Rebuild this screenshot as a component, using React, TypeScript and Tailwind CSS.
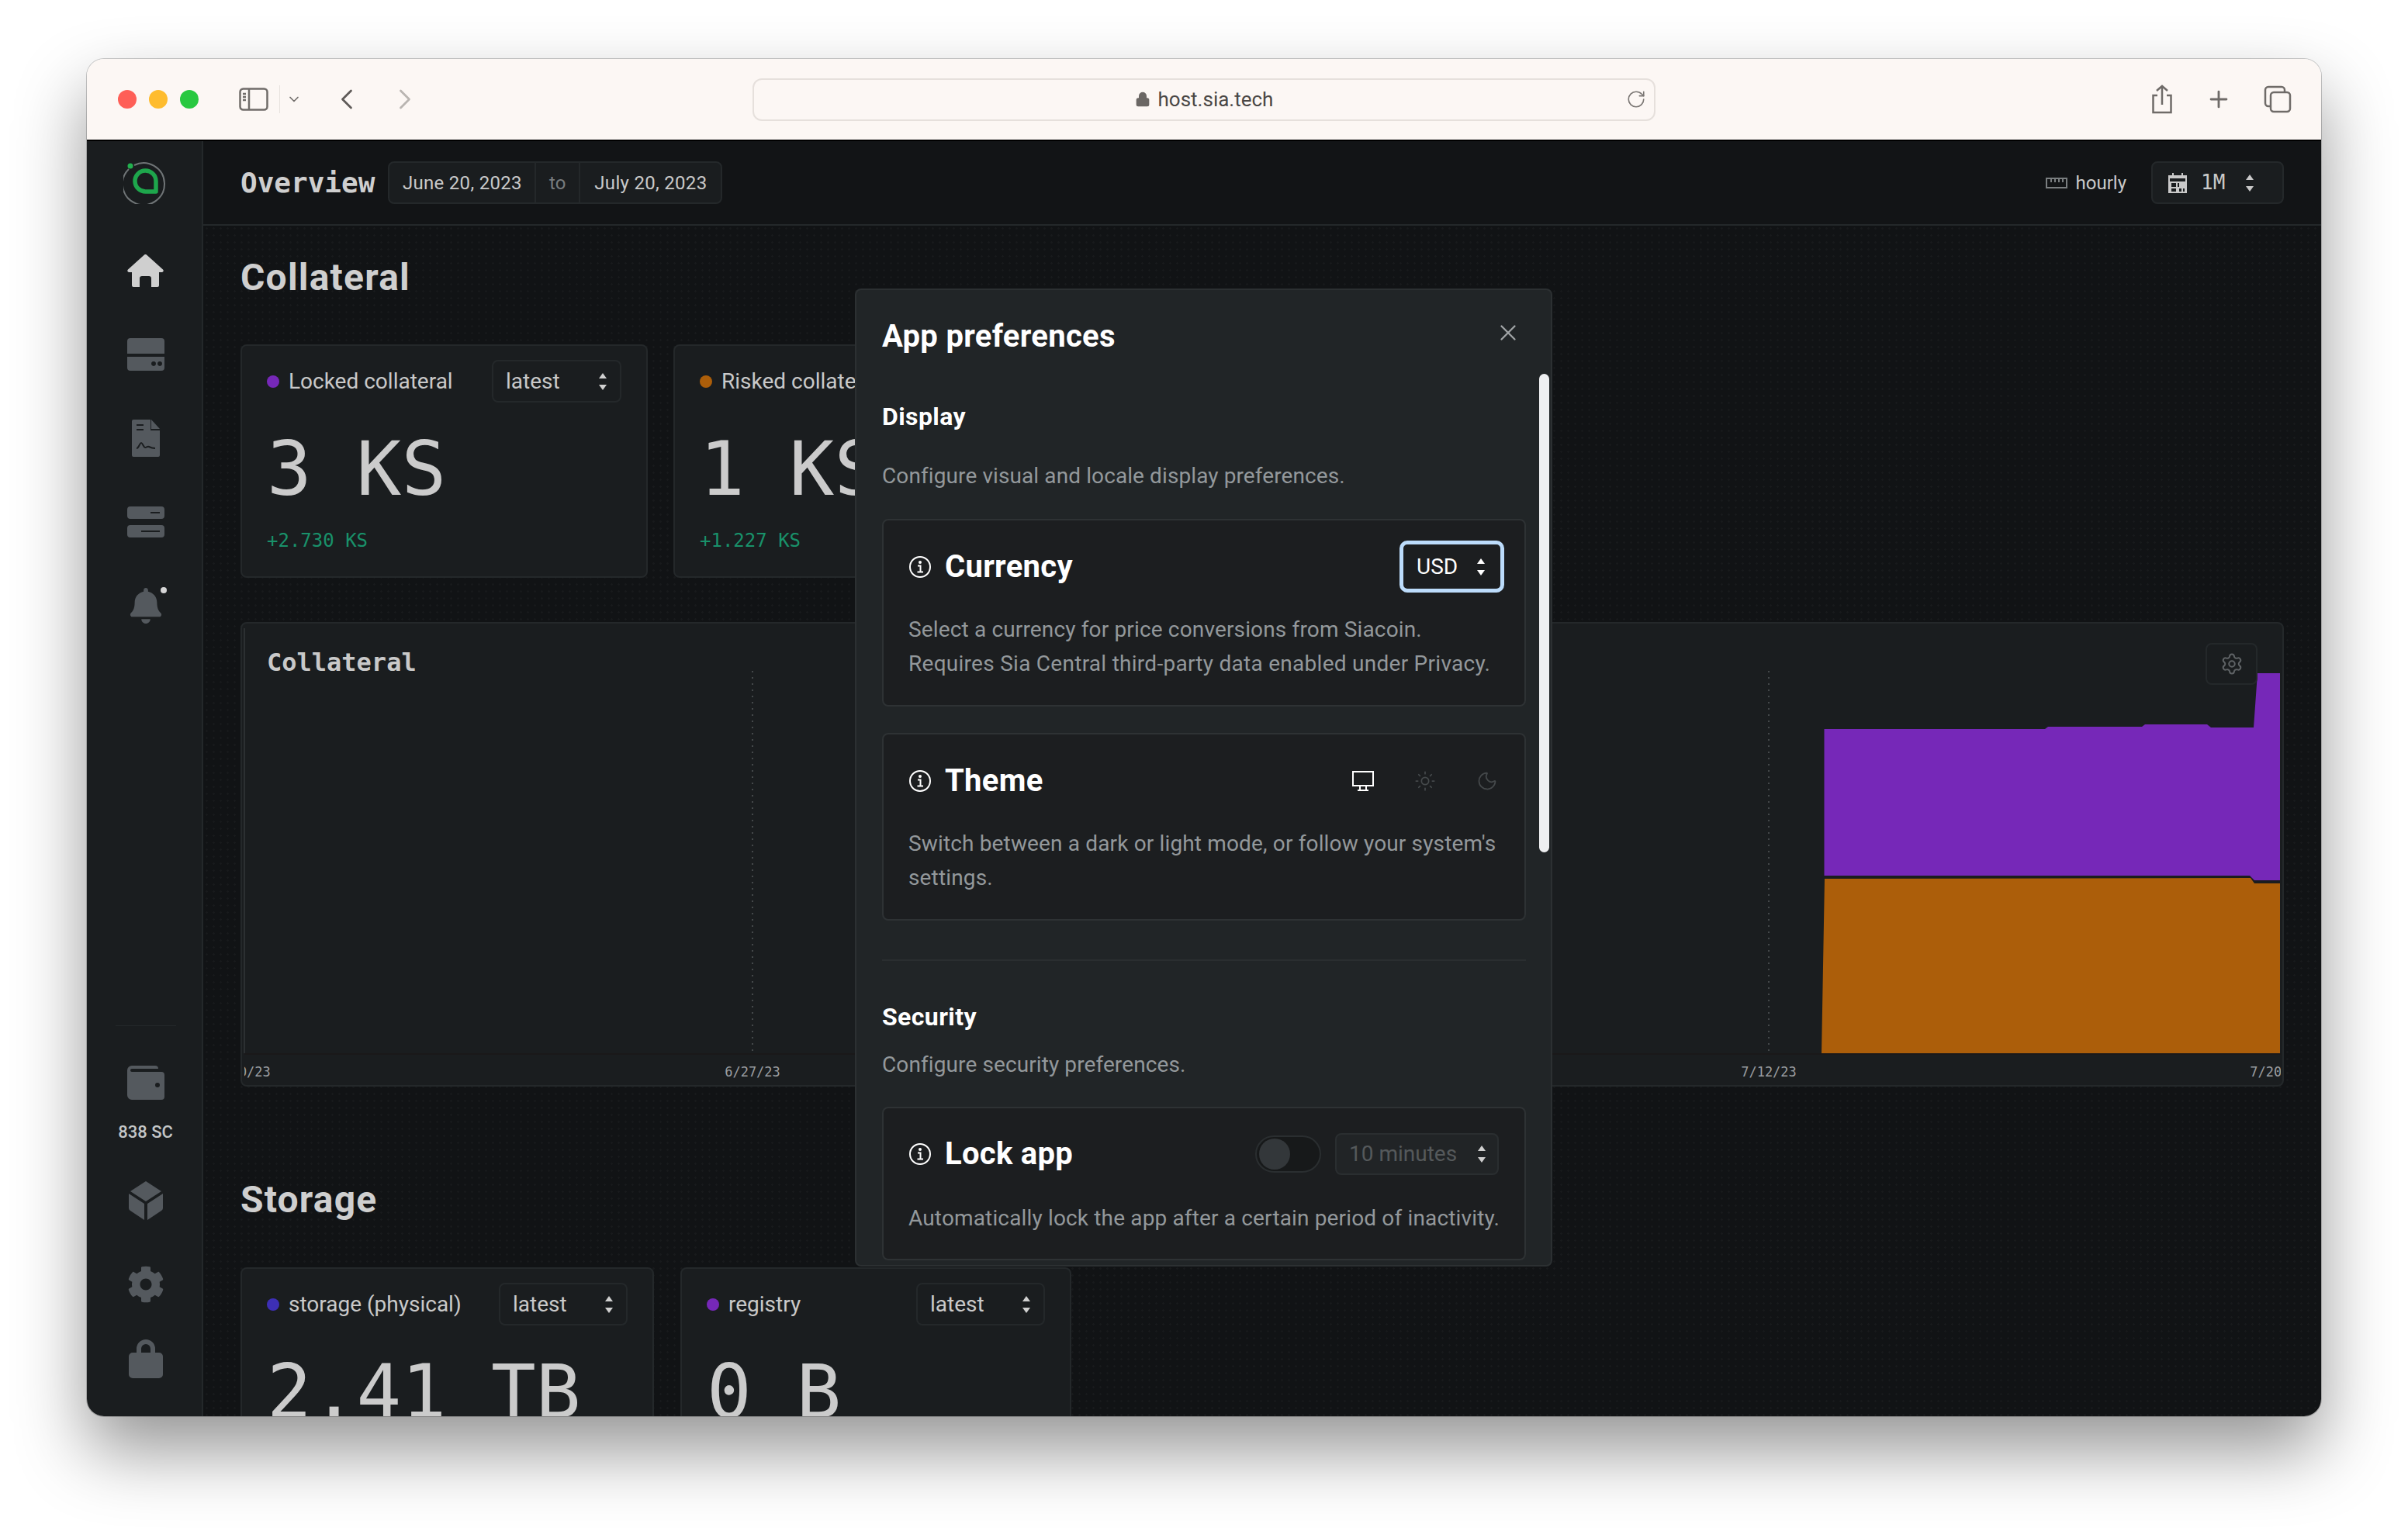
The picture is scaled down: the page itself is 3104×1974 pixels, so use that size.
import { ChevronDown, ChevronLeft, ChevronRight, Lock, Moon, Plus, RotateCw, Settings, Sun, X } from "lucide-react";
import { FaBell, FaCog } from "react-icons/fa";

const sans = "font-['Roboto','Liberation_Sans',sans-serif]";
const mono = "font-['DejaVu_Sans_Mono',monospace]";

function UpDown({ className = "text-[#d0d0d0]" }: { className?: string }) {
  return (
    <svg width="12" height="24" viewBox="0 0 12 24" className={className} fill="currentColor">
      <path d="M6 1l5 7H1z" />
      <path d="M6 23l5-7H1z" />
    </svg>
  );
}

function Select({ label, className }: { label: string; className: string }) {
  return (
    <div className={`flex h-[55px] items-center justify-between rounded-[8px] border-2 border-[#24282a] bg-[#1a1d1f] pl-[16px] pr-[16px] text-[28px] text-[#c9c9c9] ${className}`}>
      <span>{label}</span>
      <UpDown />
    </div>
  );
}

function StatCard({ color, label, value, delta, width, selectWidth, cut }: { color: string; label: string; value: string; delta?: string; width: string; selectWidth: string; cut?: boolean }) {
  return (
    <div className={`shrink-0 rounded-[8px] border-2 border-[#24282a] bg-[#1a1d1f] px-[32px] pt-[18px] ${cut ? "h-[260px]" : "h-[301px]"} ${width}`}>
      <div className="flex items-center justify-between">
        <div className="flex items-center gap-[12px] whitespace-nowrap text-[28px] text-[#c9c9c9]">
          <span className={`size-[16px] rounded-full ${color}`} />
          {label}
        </div>
        <Select label="latest" className={selectWidth} />
      </div>
      <div className={`mt-[30px] h-[112px] whitespace-pre text-[96px] leading-[112px] text-[#cbcbcb] ${mono}`}>{value}</div>
      {delta && <div className={`mt-[18px] text-[24px] text-[#19916a] ${mono}`}>{delta}</div>}
    </div>
  );
}

function InfoIcon() {
  return (
    <svg width="30" height="30" viewBox="0 0 30 30" fill="none" stroke="white" strokeWidth="2" className="shrink-0">
      <circle cx="15" cy="15" r="13" />
      <path d="M12 13.5h3.5v8M11.5 21.5h7.5" />
      <circle cx="15" cy="9" r="1" fill="white" />
    </svg>
  );
}

function PrefCard({ title, children, desc, lock }: { title: string; children: React.ReactNode; desc: React.ReactNode; lock?: boolean }) {
  return (
    <div className={`rounded-[8px] border-2 border-[#2e3234] bg-[#1c1e20] pl-[32px] pr-[26px] ${lock ? "h-[198px] pt-[32px]" : "h-[242px] pt-[26px]"}`}>
      <div className={`flex items-center justify-between ${lock ? "h-[54px]" : "h-[67px]"}`}>
        <div className="flex items-center gap-[17px]">
          <InfoIcon />
          <span className="text-[40px] font-bold tracking-[0.3px] text-white">{title}</span>
        </div>
        {children}
      </div>
      <p className={`${lock ? "mt-[34px]" : "mt-[26px]"} text-[28px] leading-[44px] tracking-[0.15px] text-[#93989b]`}>{desc}</p>
    </div>
  );
}

function Chart() {
  return (
    <svg viewBox="2 2 2630 595" className="block h-[595px] w-[2630px]">
      <defs>
        <clipPath id="plot">
          <rect x="5" y="0" width="2625" height="599" />
        </clipPath>
      </defs>
      <line x1="5" y1="8" x2="5" y2="556" stroke="#2c3032" strokeWidth="2" />
      <line x1="660" y1="63" x2="660" y2="555" stroke="#44484a" strokeWidth="2" strokeDasharray="2 6" />
      <line x1="1970" y1="63" x2="1970" y2="555" stroke="#44484a" strokeWidth="2" strokeDasharray="2 6" />
      <path d="M2041.5 138L2326 138L2330 135L2451 135L2455 132L2535 132L2540 136L2595 136L2600 66L2629 66L2629 333L2596 333L2590 327L2041.5 327Z" fill="#7628b8" />
      <path d="M2038 557L2042 331L2591 330L2596 337L2629 337L2629 557Z" fill="#ac5e0a" />
      <line x1="5" y1="557" x2="2630" y2="557" stroke="#1a1819" strokeWidth="2" />
      <g clipPath="url(#plot)" fontFamily="DejaVu Sans Mono, monospace" fontSize="17" fill="#9a9ea1" textAnchor="middle">
        <text x="3" y="586">6/20/23</text>
        <text x="660" y="586">6/27/23</text>
        <text x="1970" y="586">7/12/23</text>
        <text x="2626" y="586">7/20/23</text>
      </g>
    </svg>
  );
}

function SiaLogo() {
  return (
    <svg width="58" height="58" viewBox="0 0 58 58" fill="none">
      <path d="M14 8A27 27 0 1 1 7 13" stroke="#6f7476" strokeWidth="2" />
      <circle cx="9" cy="9" r="3.5" fill="#22b04e" />
      <path d="M42 42H29a13.5 13.5 0 1 1 13-13.5z" stroke="#1ea64c" strokeWidth="5.5" strokeLinejoin="round" />
    </svg>
  );
}

function SideItem({ children, className = "h-[108px]" }: { children: React.ReactNode; className?: string }) {
  return <div className={`relative flex items-center justify-center text-[#54595e] ${className}`}>{children}</div>;
}

export default function App() {
  return (
    <div className={`h-[1974px] w-[3104px] overflow-hidden bg-white pl-[112px] pt-[76px] ${sans}`}>
      <div className="flex h-[1750px] w-[2880px] flex-col overflow-hidden rounded-[22px] shadow-[0_0_0_1px_rgba(0,0,0,0.2),0_44px_90px_rgba(0,0,0,0.42)]">
        <div className="flex h-[106px] shrink-0 items-center border-b-2 border-black bg-[#fcf7f4] pl-[40px] pr-[38px]">
          <div className="flex gap-[16px]">
            <span className="size-[24px] rounded-full bg-[#fe5f57]" />
            <span className="size-[24px] rounded-full bg-[#febc2e]" />
            <span className="size-[24px] rounded-full bg-[#28c840]" />
          </div>
          <svg width="38" height="30" viewBox="0 0 38 30" fill="none" stroke="#706c69" strokeWidth="2.5" className="ml-[52px]">
            <rect x="1.5" y="1.5" width="35" height="27" rx="4" />
            <path d="M13 2v26M5 8h4M5 12h4M5 16h4" />
          </svg>
          <div className="ml-[14px] h-[36px] w-px bg-[#e8e2de]" />
          <ChevronDown size={20} color="#706c69" className="ml-[8px]" />
          <ChevronLeft size={44} color="#5f5b58" strokeWidth={1.5} className="ml-[36px]" />
          <ChevronRight size={44} color="#b9b5b1" strokeWidth={1.5} className="ml-[31px]" />
          <div className="relative ml-[426px] flex h-[55px] w-[1164px] shrink-0 items-center justify-center rounded-[12px] border-2 border-[#e6e0dc]">
            <Lock size={20} color="#6b6764" fill="#6b6764" className="mr-[10px]" />
            <span className="text-[26px] text-[#4a4745]">host.sia.tech</span>
            <RotateCw size={26} color="#7a7673" strokeWidth={1.5} className="absolute right-[10px]" />
          </div>
          <div className="ml-auto flex items-center gap-[41px] text-[#6f6b68]">
            <svg width="30" height="38" viewBox="0 0 30 38" fill="none" stroke="currentColor" strokeWidth="2.5">
              <path d="M9 14H3.5v22h23V14H21M15 26V2M8 8l7-6 7 6" />
            </svg>
            <Plus size={34} strokeWidth={2} />
            <svg width="36" height="36" viewBox="0 0 36 36" fill="none" stroke="currentColor" strokeWidth="2.5">
              <rect x="9" y="9" width="25" height="25" rx="4" />
              <path d="M9 27H6a4 4 0 0 1-4-4V6a4 4 0 0 1 4-4h17a4 4 0 0 1 4 4v3" />
            </svg>
          </div>
        </div>

        <div className="flex min-h-0 flex-1">
          <aside className="flex w-[150px] shrink-0 flex-col justify-between border-r-2 border-[#24282a] bg-[#1a1d1f] pl-[3px]">
            <div>
              <div className="flex justify-center pt-[23px]">
                <SiaLogo />
              </div>
              <div className="mt-[32px]">
                <SideItem>
                  <svg width="47" height="42" viewBox="0 0 47 42" fill="#cfcfcf">
                    <path d="M23.5 0c.8 0 1.5.4 2 1L46 19.5c1.4 1.300.6 3.500-1.300 3.500H41v17a2 2 0 0 1-2 2h-8V31a3 3 0 0 0-3-3h-9a3 3 0 0 0-3 3v11H8a2 2 0 0 1-2-2V23H2.300C.4 23-.4 20.800 1 19.500L21.500 1c.5-.6 1.200-1 2-1z" />
                  </svg>
                </SideItem>
                <SideItem>
                  <svg width="48" height="42" viewBox="0 0 48 42" fill="currentColor">
                    <path d="M4 0h40a4 4 0 0 1 4 4v16H0V4a4 4 0 0 1 4-4z" />
                    <path fillRule="evenodd" d="M0 24h48v14a4 4 0 0 1-4 4H4a4 4 0 0 1-4-4zM31 33a3 3 0 1 0 0-.1zM39 33a3 3 0 1 0 0-.1z" />
                  </svg>
                </SideItem>
                <SideItem>
                  <svg width="36" height="48" viewBox="0 0 36 48" fill="currentColor">
                    <path d="M2 0h22v14h12v32a2 2 0 0 1-2 2H2a2 2 0 0 1-2-2V2a2 2 0 0 1 2-2z" />
                    <path d="M25 0l11 12H25z" />
                    <path d="M6 7h9M6 13h9M6 37c3 0 4-7 6-7s3 6 5 6 3-2 5-1 4 2 8 2" fill="none" stroke="#1a1d1f" strokeWidth="2" />
                  </svg>
                </SideItem>
                <SideItem>
                  <svg width="48" height="40" viewBox="0 0 48 40" fill="currentColor">
                    <path fillRule="evenodd" d="M4 0h40a4 4 0 0 1 4 4v8a4 4 0 0 1-4 4H4a4 4 0 0 1-4-4V4a4 4 0 0 1 4-4zM30 7v2h12V7z" />
                    <path fillRule="evenodd" d="M4 24h40a4 4 0 0 1 4 4v8a4 4 0 0 1-4 4H4a4 4 0 0 1-4-4v-8a4 4 0 0 1 4-4zM18 31v2h24v-2z" />
                  </svg>
                </SideItem>
                <SideItem>
                  <FaBell size={46} />
                  <span className="absolute left-[92px] top-[30px] h-[8px] w-[8px] rounded-full bg-[#d6d6d6]" />
                </SideItem>
              </div>
            </div>
            <div className="pb-[44px]">
              <div className="mx-auto w-[78px] border-t border-[#24282a]" />
              <SideItem className="mt-[48px] h-[50px]">
                <svg width="48" height="44" viewBox="0 0 48 44" fill="currentColor">
                  <path d="M6 0h30a4 4 0 0 1 4 4H6a2 2 0 0 0 0 4h38a4 4 0 0 1 4 4v28a4 4 0 0 1-4 4H6a6 6 0 0 1-6-6V6a6 6 0 0 1 6-6z" />
                  <circle cx="39" cy="25" r="3" fill="#1a1d1f" />
                </svg>
              </SideItem>
              <div className="mt-[22px] text-center text-[22px] font-medium text-[#c4c6c7]">838 SC</div>
              <SideItem className="mt-[42px] h-[60px]">
                <svg width="44" height="50" viewBox="0 0 44 50" fill="currentColor">
                  <path d="M22 0l20 13-20 13L2 13z" />
                  <path d="M0 16l20 13v21L2 38a4 4 0 0 1-2-3z" />
                  <path d="M44 16L24 29v21l18-12a4 4 0 0 0 2-3z" />
                </svg>
              </SideItem>
              <SideItem className="mt-[48px] h-[60px]"><FaCog size={48} /></SideItem>
              <SideItem className="mt-[36px] h-[60px]">
                <svg width="44" height="50" viewBox="0 0 44 50" fill="currentColor">
                  <path fillRule="evenodd" d="M10 17v-5a12 12 0 0 1 24 0v5h5a5 5 0 0 1 5 5v23a5 5 0 0 1-5 5H5a5 5 0 0 1-5-5V22a5 5 0 0 1 5-5zm6 0h12v-5a6 6 0 0 0-12 0z" />
                </svg>
              </SideItem>
            </div>
          </aside>

          <main className="relative min-w-0 flex-1 overflow-hidden bg-[#111315] bg-[radial-gradient(#181a1c_1px,transparent_1.5px)] bg-[length:9px_9px]">
            <header className="flex h-[109px] items-center justify-between border-b-2 border-[#24282a] bg-[#121416] pl-[48px] pr-[48px]">
              <div className="flex items-center">
                <h1 className={`text-[36px] font-bold text-[#cfcfcf] ${mono}`}>Overview</h1>
                <div className="ml-[17px] flex h-[55px] items-center rounded-[8px] border-2 border-[#24282a] bg-[#1a1d1f] text-[24px] tracking-[0.3px] text-[#c9c9c9]">
                  <span className="flex h-full w-[189px] items-center justify-center border-r-2 border-[#24282a]">June 20, 2023</span>
                  <span className="flex h-full w-[57px] items-center justify-center border-r-2 border-[#24282a] text-[#777b7e]">to</span>
                  <span className="flex h-full w-[181px] items-center justify-center">July 20, 2023</span>
                </div>
              </div>
              <div className="flex items-center">
                <svg width="28" height="14" viewBox="0 0 28 14" fill="none" stroke="#7a7e80" strokeWidth="2">
                  <rect x="1" y="1" width="26" height="12" />
                  <path d="M7 1v5M12 1v5M17 1v5M22 1v5" />
                </svg>
                <span className="ml-[11px] text-[24px] text-[#c9c9c9]">hourly</span>
                <div className="ml-[32px] flex h-[55px] w-[171px] items-center rounded-[8px] border-2 border-[#24282a] bg-[#1a1d1f] pl-[20px]">
                  <svg width="24" height="26" viewBox="0 0 24 26" fill="#c9c9c9">
                    <path fillRule="evenodd" d="M5 0h2v3h10V0h2v3h5v23H0V3h5zM2 7v4h20V7zM4 13v5h6v-5zm8 0v5h2v-5zM4 20v4h6v-4zm10 0v4h3v-4zm5 0v4h2v-4z" />
                  </svg>
                  <span className={`ml-[18px] text-[26px] text-[#c9c9c9] ${mono}`}>1M</span>
                  <UpDown className="ml-[26px] text-[#c9c9c9]" />
                </div>
              </div>
            </header>

            <div className="pl-[48px] pr-[48px]">
              <h2 className="mt-[37px] h-[60px] text-[48px] font-bold leading-[60px] tracking-[1.2px] text-[#cfcfcf]">Collateral</h2>
              <div className="mt-[56px] flex gap-[33px]">
                <StatCard color="bg-[#7628b8]" label="Locked collateral" value="3 KS" delta="+2.730 KS" width="w-[525px]" selectWidth="w-[167px]" />
                <StatCard color="bg-[#ac5e0a]" label="Risked collateral" value="1 KS" delta="+1.227 KS" width="w-[525px]" selectWidth="w-[167px]" />
              </div>
              <div className="relative mt-[57px] h-[599px] w-[2634px] overflow-hidden rounded-[8px] border-2 border-[#24282a] bg-[#1a1d1f]">
                <Chart />
                <div className={`absolute left-[32px] top-[26px] text-[32px] font-bold text-[#c9c9c9] ${mono}`}>Collateral</div>
                <div className="absolute left-[2531px] top-[25px] flex h-[54px] w-[67px] items-center justify-center rounded-[8px] border-2 border-[#24282a] bg-[#1a1d1f]">
                  <Settings size={30} color="#5f6366" strokeWidth={1.6} />
                </div>
              </div>
              <h2 className="mt-[116px] h-[60px] text-[48px] font-bold leading-[60px] tracking-[1.200px] text-[#cfcfcf]">Storage</h2>
              <div className="mt-[57px] flex gap-[34px]">
                <StatCard cut color="bg-[#3d2fb5]" label="storage (physical)" value="2.41 TB" width="w-[533px]" selectWidth="w-[166px]" />
                <StatCard cut color="bg-[#7628b8]" label="registry" value="0 B" width="w-[504px]" selectWidth="w-[166px]" />
              </div>
            </div>

            <div className="absolute left-[840px] top-[190px] h-[1261px] w-[899px] overflow-hidden rounded-[8px] border-2 border-[#2c3032] bg-[#212527] pl-[33px] pr-[32px] pt-[35px]">
              <div className="flex h-[50px] items-center justify-between">
                <h2 className="text-[40px] font-bold leading-[50px] tracking-[0.3px] text-white">App preferences</h2>
                <X size={34} color="#a0a4a6" strokeWidth={1.6} className="mb-[10px] mr-[6px]" />
              </div>
              <div className="absolute right-[2px] top-[108px] h-[617px] w-[13px] rounded-full bg-[#eeeff1]" />
              <div className="w-[830px]">
                <h3 className="mt-[58px] h-[40px] text-[32px] font-bold leading-[40px] tracking-[0.4px] text-white">Display</h3>
                <p className="mt-[37px] h-[40px] text-[28px] leading-[40px] tracking-[0.1px] text-[#93989b]">Configure visual and locale display preferences.</p>
                <div className="mt-[35px]">
                  <PrefCard title="Currency" desc={<>Select a currency for price conversions from Siacoin.<br /><span className="tracking-[0.27px]">Requires Sia Central third-party data enabled under Privacy.</span></>}>
                    <div className="flex h-[67px] w-[135px] items-center justify-between rounded-[10px] border-[5px] border-[#bcdcfb] bg-[#1c1e20] pl-[17px] pr-[19px] text-[28px] text-white">
                      USD
                      <UpDown className="text-white" />
                    </div>
                  </PrefCard>
                </div>
                <div className="mt-[34px]">
                  <PrefCard title="Theme" desc="Switch between a dark or light mode, or follow your system's settings.">
                    <div className="flex items-center gap-[52px] pr-[8px] text-[#45494b]">
                      <svg width="28" height="28" viewBox="0 0 28 28" fill="none" stroke="white" strokeWidth="2">
                        <rect x="1" y="2" width="26" height="18" />
                        <path d="M10 20v6M18 20v6M7 26h14" />
                      </svg>
                      <Sun size={28} strokeWidth={1.5} />
                      <Moon size={28} strokeWidth={1.5} />
                    </div>
                  </PrefCard>
                </div>
                <div className="mt-[50px] border-t-2 border-[#2a2e30]" />
                <h3 className="mt-[52px] h-[40px] text-[32px] font-bold leading-[40px] tracking-[0.4px] text-white">Security</h3>
                <p className="mt-[22px] h-[40px] text-[28px] leading-[40px] tracking-[0.1px] text-[#93989b]">Configure security preferences.</p>
                <div className="mt-[34px]">
                  <PrefCard lock title="Lock app" desc="Automatically lock the app after a certain period of inactivity.">
                    <div className="flex items-center gap-[18px] pr-[7px]">
                      <div className="flex h-[48px] w-[85px] items-center rounded-full border-2 border-[#2a2e30] bg-[#17191a] pl-[3px]">
                        <span className="h-[40px] w-[40px] rounded-full bg-[#33373a]" />
                      </div>
                      <div className="flex h-[54px] w-[211px] items-center justify-between rounded-[8px] border-2 border-[#2a2e30] bg-[#212426] pl-[16px] pr-[14px] text-[28px] text-[#55595b]">
                        10 minutes
                        <UpDown className="text-[#d0d0d0]" />
                      </div>
                    </div>
                  </PrefCard>
                </div>
              </div>
            </div>
          </main>
        </div>
      </div>
    </div>
  );
}
